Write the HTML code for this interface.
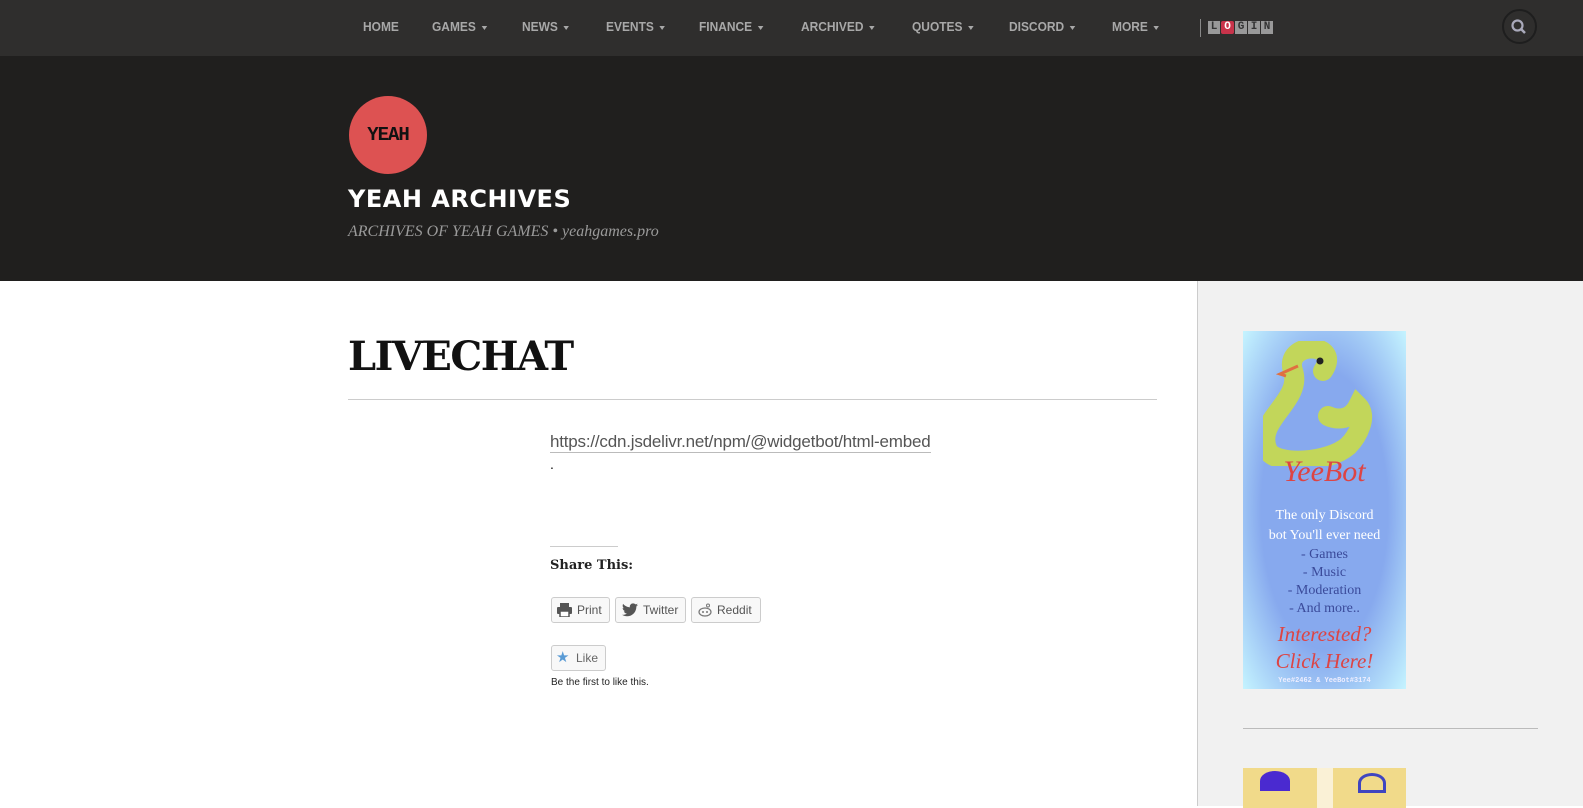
<!DOCTYPE html>
<html><head><meta charset="utf-8"><style>
*{margin:0;padding:0;box-sizing:border-box}
body{width:1583px;height:806px;overflow:hidden;background:#fff;font-family:"Liberation Sans",sans-serif;position:relative}
.nav{position:absolute;top:0;left:0;width:1583px;height:56px;background:#2f2e2d}
.nav a{position:absolute;top:19px;color:#a8a8a8;font:bold 13px "Liberation Sans",sans-serif;text-decoration:none;transform:scaleX(0.92);transform-origin:left}
.car{display:inline-block;width:0;height:0;border-left:3.5px solid transparent;border-right:3.5px solid transparent;border-top:4px solid #a8a8a8;margin-left:6px;vertical-align:middle}
.hdr{position:absolute;top:56px;left:0;width:1583px;height:225px;background:#201f1e}
.side{position:absolute;top:281px;left:1197px;width:386px;height:525px;background:#f1f1f1;border-left:1px solid #ccc}
</style></head><body>
<div class="nav">
<a style="left:363px">HOME</a>
<a style="left:432px">GAMES<span class="car"></span></a>
<a style="left:522px">NEWS<span class="car"></span></a>
<a style="left:606px">EVENTS<span class="car"></span></a>
<a style="left:699px">FINANCE<span class="car"></span></a>
<a style="left:801px">ARCHIVED<span class="car"></span></a>
<a style="left:912px">QUOTES<span class="car"></span></a>
<a style="left:1009px">DISCORD<span class="car"></span></a>
<a style="left:1112px">MORE<span class="car"></span></a>
<div style="position:absolute;left:1200px;top:19px;width:1px;height:18px;background:#888"></div>
<div style="position:absolute;left:1208px;top:21px;display:flex;gap:1px;font:bold 11px 'Liberation Mono',monospace;line-height:13px">
<span style="background:#999;color:#333;width:12px;text-align:center">L</span><span style="background:#c8334a;color:#fff;width:13px;text-align:center;border-radius:2px">O</span><span style="background:#999;color:#333;width:12px;text-align:center">G</span><span style="background:#999;color:#333;width:12px;text-align:center">I</span><span style="background:#999;color:#333;width:12px;text-align:center">N</span></div>
<div style="position:absolute;left:1502px;top:9px;width:35px;height:35px;border-radius:50%;border:2px solid #1e1e1e"></div>
<svg style="position:absolute;left:1510px;top:18px" width="18" height="18"><circle cx="7.5" cy="7.5" r="5" fill="none" stroke="#aab" stroke-width="2.2"/><line x1="11" y1="11" x2="15" y2="15" stroke="#aab" stroke-width="2.5"/></svg>
</div>
<div class="hdr">
<div style="position:absolute;left:349px;top:40px;width:78px;height:78px;border-radius:50%;background:#dd5252"></div>
<div style="position:absolute;left:351px;top:68px;width:74px;text-align:center;font:bold 19px 'Liberation Mono',monospace;color:#111;letter-spacing:-1px">YEAH</div>
<div style="position:absolute;left:348px;top:129px;font:bold 24px 'DejaVu Sans',sans-serif;color:#fff;letter-spacing:0.5px">YEAH ARCHIVES</div>
<div style="position:absolute;left:348px;top:167px;font:italic 16px 'Liberation Serif',serif;color:#9a9a9a">ARCHIVES OF YEAH GAMES • yeahgames.pro</div>
</div>
<div style="position:absolute;left:348px;top:333px;font:bold 40px 'DejaVu Serif',serif;color:#111;letter-spacing:-1.5px">LIVECHAT</div>
<div style="position:absolute;left:348px;top:399px;width:809px;height:1px;background:#ccc"></div>
<div style="position:absolute;left:550px;top:431px;font:17px 'Liberation Sans',sans-serif;color:#555;border-bottom:1px solid #bbb;line-height:21px;letter-spacing:-0.2px">https://cdn.jsdelivr.net/npm/@widgetbot/html-embed</div>
<div style="position:absolute;left:550px;top:456px;font:14px sans-serif;color:#111">.</div>
<div style="position:absolute;left:550px;top:546px;width:68px;height:1px;background:#ccc"></div>
<div style="position:absolute;left:550px;top:558px;font:bold 13px 'DejaVu Serif',serif;color:#222">Share This:</div>
<div style="position:absolute;left:551px;top:597px;width:59px;height:26px;border:1px solid #ccc;border-radius:3px;background:#f8f8f8;font:12px sans-serif;color:#555;padding:5px 0 0 25px">Print</div>
<svg style="position:absolute;left:557px;top:603px" width="15" height="14"><rect x="3" y="0" width="9" height="4" fill="#555"/><rect x="0" y="4" width="15" height="7" rx="1" fill="#555"/><rect x="3" y="8" width="9" height="6" fill="#fff" stroke="#555" stroke-width="1.5"/></svg>
<div style="position:absolute;left:615px;top:597px;width:71px;height:26px;border:1px solid #ccc;border-radius:3px;background:#f8f8f8;font:12px sans-serif;color:#555;padding:5px 0 0 27px">Twitter</div>
<svg style="position:absolute;left:622px;top:603px" width="16" height="14" viewBox="0 0 24 20"><path d="M24 2.3c-.9.4-1.8.7-2.8.8 1-.6 1.8-1.600 2.2-2.7-1 .6-2 1-3.1 1.2C19.3.6 18 0 16.6 0c-2.7 0-4.9 2.2-4.9 4.9 0 .4 0 .8.1 1.1C7.7 5.8 4.1 3.9 1.7.9c-.4.7-.7 1.6-.7 2.5 0 1.7.9 3.2 2.2 4.1-.8 0-1.6-.2-2.2-.6 0 2.4 1.7 4.4 3.9 4.8-.7.2-1.5.2-2.2.1.6 2 2.4 3.4 4.6 3.4-1.7 1.3-3.8 2.1-6.1 2.1-.4 0-.8 0-1.2-.1 2.2 1.4 4.8 2.2 7.5 2.2 9.1 0 14-7.5 14-14v-.6c1-.7 1.8-1.6 2.5-2.5z" fill="#555"/></svg>
<div style="position:absolute;left:691px;top:597px;width:70px;height:26px;border:1px solid #ccc;border-radius:3px;background:#f8f8f8;font:12px sans-serif;color:#555;padding:5px 0 0 25px">Reddit</div>
<svg style="position:absolute;left:697px;top:603px" width="16" height="14"><ellipse cx="8" cy="9" rx="6" ry="4" fill="none" stroke="#777" stroke-width="1.2"/><circle cx="11" cy="2.5" r="1.5" fill="none" stroke="#777"/><circle cx="6" cy="9" r="1" fill="#777"/><circle cx="10" cy="9" r="1" fill="#777"/></svg>
<div style="position:absolute;left:551px;top:645px;width:55px;height:26px;border:1px solid #ccc;border-radius:3px;background:#f8f8f8;font:12px sans-serif;color:#666;padding:5px 0 0 24px">Like</div>
<div style="position:absolute;left:556px;top:648px;font:15px 'DejaVu Sans',sans-serif;color:#5a9bd5">★</div>
<div style="position:absolute;left:551px;top:677px;font:10px 'Liberation Sans',sans-serif;color:#222">Be the first to like this.</div>
<div class="side">
<div style="position:absolute;left:45px;top:50px;width:163px;height:358px;background:radial-gradient(ellipse at center,#87a9ee 55%,#c5f4ff 100%)">
<svg style="position:absolute;left:20px;top:10px" width="120" height="125"><path d="M60 30c20-30-40-30-30 0 10 30-40 50-25 80 10 15 60 12 80-5 10-10 20-30 10-40-10 20-30 10-30 10" fill="none" stroke="#c2d65a" stroke-width="20" stroke-linecap="round"/><circle cx="57" cy="20" r="3.5" fill="#222"/><path d="M35 25l-18 8 6 2" fill="none" stroke="#e07040" stroke-width="3"/></svg>
<div style="position:absolute;top:124px;width:163px;text-align:center;font:italic 30px 'Liberation Serif',serif;color:#d44">YeeBot</div>
<div style="position:absolute;top:175px;width:163px;text-align:center;font:14px/20px 'Liberation Serif',serif;color:#fff">The only Discord<br>bot You'll ever need</div>
<div style="position:absolute;top:215px;width:163px;text-align:center;font:14px/18px 'Liberation Serif',serif;color:#3a4a9a">- Games<br>- Music<br>- Moderation<br>- And more..</div>
<div style="position:absolute;top:290px;width:163px;text-align:center;font:italic 21px/27px 'Liberation Serif',serif;color:#d44">Interested?<br>Click Here!</div>
<div style="position:absolute;top:346px;width:163px;text-align:center;font:bold 7px 'Liberation Mono',monospace;color:#eef">Yee#2462 &amp; YeeBot#3174</div>
</div>
<div style="position:absolute;left:45px;top:447px;width:295px;height:1px;background:#bbb"></div>
<div style="position:absolute;left:45px;top:487px;width:74px;height:40px;background:#f1da8a"></div>
<div style="position:absolute;left:119px;top:487px;width:16px;height:40px;background:#faf1d6"></div>
<div style="position:absolute;left:135px;top:487px;width:73px;height:40px;background:#f1da8a"></div>
<div style="position:absolute;left:62px;top:490px;width:30px;height:20px;border-radius:50% 50% 0 0;background:#4a2ad0"></div>
<div style="position:absolute;left:160px;top:492px;width:28px;height:20px;border-radius:50% 50% 0 0;border:3px solid #3f45c0"></div>
</div>
</body></html>
